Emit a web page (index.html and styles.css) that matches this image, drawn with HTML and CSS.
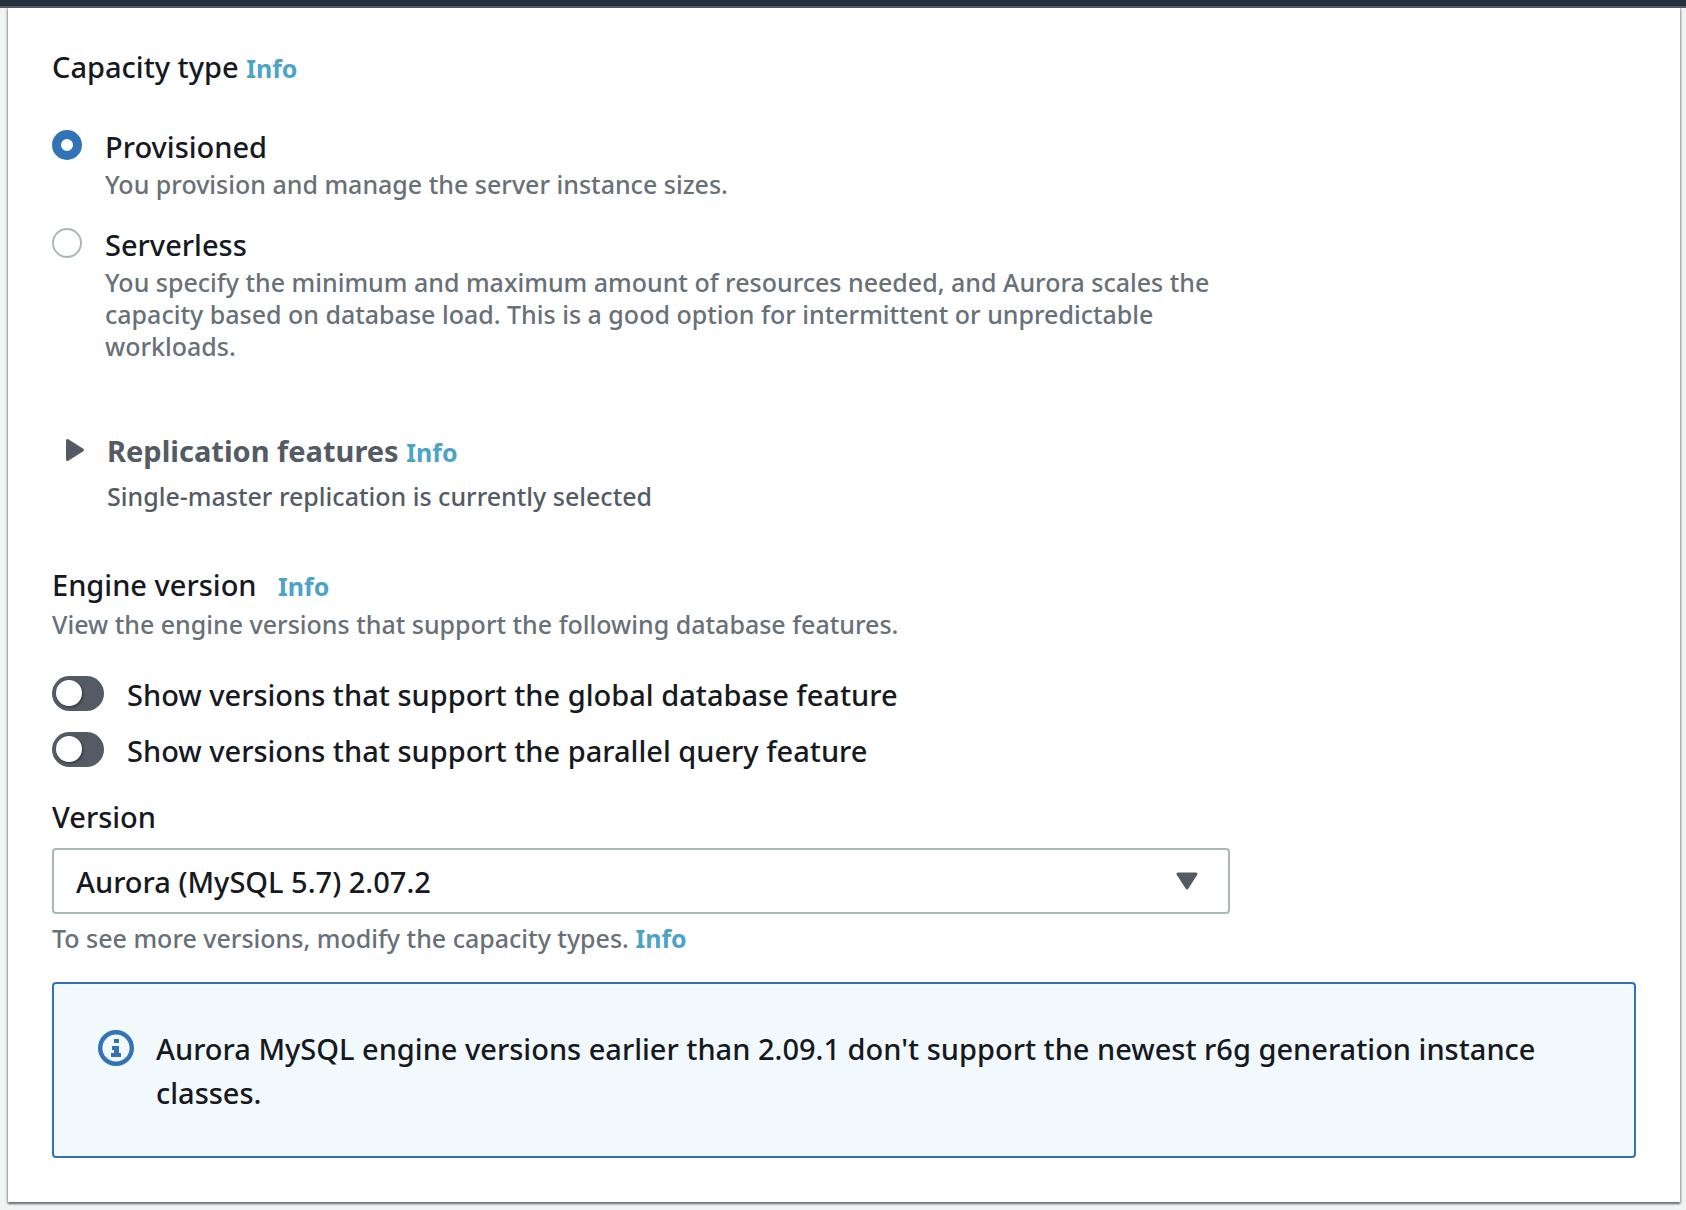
FILE: index.html
```html
<!DOCTYPE html>
<html lang="en">
<head>
<meta charset="utf-8">
<meta name="viewport" content="width=device-width, initial-scale=1">
<title>Create database</title>
<link rel="stylesheet" href="styles.css">
</head>
<body>
<header class="topbar"></header>
<main class="card">
  <fieldset class="field capacity">
    <legend class="heading">Capacity type <a class="info" href="#">Info</a></legend>
    <div class="option">
      <input class="radio" type="radio" name="capacity" id="provisioned" checked>
      <div class="option-body">
        <label class="label" for="provisioned">Provisioned</label>
        <p class="hint">You provision and manage the server instance sizes.</p>
      </div>
    </div>
    <div class="option">
      <input class="radio" type="radio" name="capacity" id="serverless">
      <div class="option-body">
        <label class="label" for="serverless">Serverless</label>
        <p class="hint">You specify the minimum and maximum amount of resources needed, and Aurora scales the capacity based on database load. This is a good option for intermittent or unpredictable workloads.</p>
      </div>
    </div>
  </fieldset>

  <section class="replication">
    <button class="expander" type="button" aria-label="Expand replication features" aria-expanded="false">
      <svg width="20" height="24" viewBox="0 0 20 24" aria-hidden="true"><path d="M2.5 2.5v19l15-9.5z" fill="#545b64" stroke="#545b64" stroke-width="3" stroke-linejoin="round"/></svg>
    </button>
    <div>
      <h2 class="heading heading-strong">Replication features <a class="info" href="#">Info</a></h2>
      <p class="hint hint-dark">Single-master replication is currently selected</p>
    </div>
  </section>

  <section class="engine">
    <h2 class="heading heading-spaced">Engine version <a class="info" href="#">Info</a></h2>
    <p class="hint">View the engine versions that support the following database features.</p>
    <div class="toggles">
      <label class="toggle-row"><input class="toggle" type="checkbox" role="switch"><span class="label">Show versions that support the global database feature</span></label>
      <label class="toggle-row"><input class="toggle" type="checkbox" role="switch"><span class="label">Show versions that support the parallel query feature</span></label>
    </div>
  </section>

  <section class="version">
    <label class="label" for="version">Version</label>
    <div class="select-wrap">
      <select class="select" id="version"><option>Aurora (MySQL 5.7) 2.07.2</option></select>
      <svg class="caret" width="22" height="18" viewBox="0 0 22 18" aria-hidden="true"><path d="M2 2h18l-9 14z" fill="#545b64" stroke="#545b64" stroke-width="3" stroke-linejoin="round"/></svg>
    </div>
    <p class="hint">To see more versions, modify the capacity types. <a class="info" href="#">Info</a></p>
  </section>

  <div class="alert" role="note">
    <svg class="alert-icon" width="36" height="36" viewBox="0 0 36 36" aria-hidden="true"><circle cx="18" cy="18" r="15.8" fill="none" stroke="#3273b8" stroke-width="4.4"/><path d="M16 9h5v4h-5zM14 16h7v7h2v4H13v-4h3v-3h-2z" fill="#3273b8"/></svg>
    <p class="alert-text">Aurora MySQL engine versions earlier than 2.09.1 don't support the newest r6g generation instance classes.</p>
  </div>
</main>
</body>
</html>
```
FILE: styles.css
```css
* { box-sizing: border-box; }
body {
  margin: 0;
  background: #f2f3f3;
  color: #16191f;
  font-family: "Noto Sans", "Open Sans", sans-serif;
  font-size: 29px;
  font-weight: 500;
  line-height: 36px;
}
h2, p { margin: 0; }
.topbar {
  height: 8px;
  background: #262f3d;
  border-bottom: 2px solid #545b64;
}
.card {
  margin: 0 6px 8px 8px;
  padding: 37px 44px 44px;
  background: #fff;
  box-shadow: 0 2px 2px #687078, 0 0 2px 1px #aab7b8;
  clip-path: inset(0 -6px -8px -8px);
}
.field { border: 0; margin: 0; padding: 0; min-width: 0; }
.heading { padding: 0; font-size: 29px; font-weight: 500; line-height: 44px; }
.heading-strong { font-weight: 700; color: #545b64; }
.heading-spaced .info { margin-left: 14px; }
.info { color: #4ba3c7; font-size: 25px; font-weight: 700; text-decoration: none; }
.label { display: block; }
.hint { color: #687078; font-size: 25px; line-height: 32px; }
.hint-dark { color: #545b64; margin-top: 6px; }

.capacity { max-width: 1178px; }
.option { display: flex; gap: 23px; }
.capacity .heading { margin-bottom: 39px; }
.option + .option { margin-top: 27px; }
.option-body { flex: 1; }
.option .hint { margin-top: 3px; }
.radio {
  appearance: none;
  flex: none;
  width: 30px;
  height: 30px;
  margin: 1px 0 0;
  border: 2px solid #aab7b8;
  border-radius: 50%;
  background: #fff;
}
.radio:checked { border: 9px solid #3273b8; }

.replication { display: flex; gap: 20px; margin-top: 67px; padding-left: 13px; }
.expander {
  flex: none;
  display: flex;
  align-self: flex-start;
  width: 22px;
  margin-top: 9px;
  padding: 0;
  border: 0;
  background: none;
}

.engine { margin-top: 51px; }
.engine .hint { margin-top: 0; }
.toggles { display: grid; gap: 20px; margin-top: 35px; }
.toggle-row { display: flex; align-items: center; gap: 23px; }
.toggle-row .label { padding-top: 2px; margin-bottom: -2px; }
.toggle {
  appearance: none;
  flex: none;
  display: flex;
  align-items: center;
  width: 52px;
  height: 35px;
  margin: 0;
  padding: 0 4px;
  border-radius: 18px;
  background: #545b64;
}
.toggle::before {
  content: "";
  width: 26px;
  height: 26px;
  border-radius: 50%;
  background: #fff;
  box-shadow: 1px 1px 1px 1px #3f454d;
}
.toggle:checked { justify-content: flex-end; background: #3273b8; }

.version { margin-top: 32px; }
.select-wrap { position: relative; max-width: 1178px; margin: 13px 0 8px; }
.select {
  appearance: none;
  display: block;
  width: 100%;
  height: 66px;
  padding: 2px 60px 0 22px;
  border: 2px solid #aab7b8;
  border-radius: 4px;
  background: #fff;
  color: inherit;
  font: inherit;
}
.caret { position: absolute; top: 24px; right: 32px; pointer-events: none; }

.alert {
  display: flex;
  gap: 22px;
  margin-top: 28px;
  padding: 43px 44px 41px;
  border: 2px solid #3273b8;
  border-radius: 4px;
  background: #f2f9fc;
}
.alert-icon { flex: none; margin-top: 3px; }
.alert-text { line-height: 44px; }
```
